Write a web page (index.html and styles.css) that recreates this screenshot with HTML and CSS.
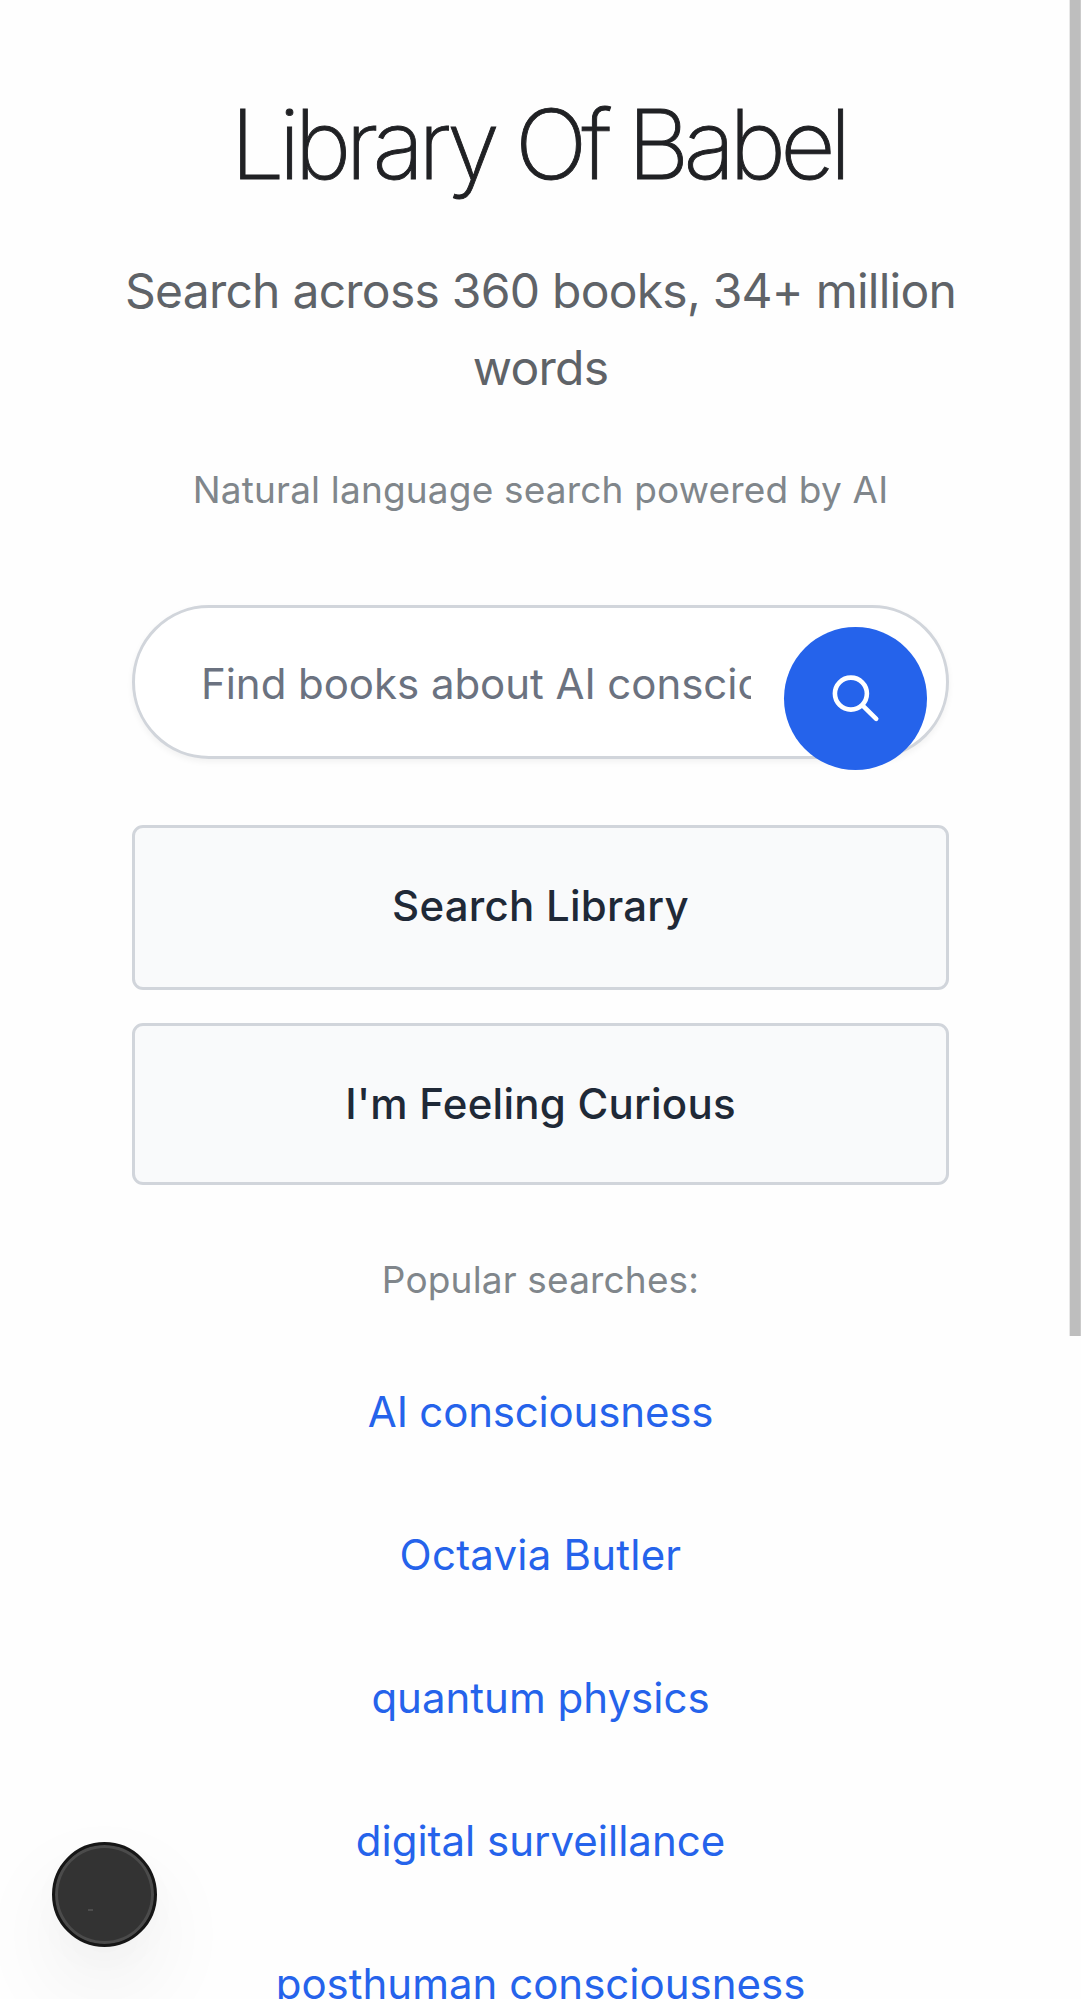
FILE: index.html
```
<!DOCTYPE html>
<html lang="en">
<head>
<meta charset="utf-8">
<title>Library Of Babel</title>
<link rel="stylesheet" href="styles.css">
</head>
<body>
<main class="page">
  <header class="hero">
    <h1 class="title">Library Of Babel</h1>
    <p class="subtitle">Search across 360 books, 34+ million words</p>
    <p class="tagline">Natural language search powered by AI</p>
  </header>
  <form class="search">
    <div class="search-box">
      <span class="search-text">Find books about AI consciousness</span>
      <button class="search-submit" type="button" aria-label="Search">
        <svg class="search-icon" viewBox="0 0 48 48" fill="none" stroke="#fff" stroke-width="4.6" stroke-linecap="round">
          <circle cx="18.9" cy="18.6" r="16"/>
          <path d="M31 30.8 44.2 43.8"/>
        </svg>
      </button>
    </div>
    <div class="actions">
      <button class="action action-primary" type="button">Search Library</button>
      <button class="action action-random" type="button">I'm Feeling Curious</button>
    </div>
  </form>
  <section class="popular">
    <p class="popular-label">Popular searches:</p>
    <nav class="popular-links">
      <a class="link link-tight">AI consciousness</a>
      <a class="link link-wide">Octavia Butler</a>
      <a class="link">quantum physics</a>
      <a class="link">digital surveillance</a>
      <a class="link">posthuman consciousness</a>
    </nav>
  </section>
</main>
<div class="fab"><span class="fab-mark"></span></div>
<div class="scrollbar"></div>
</body>
</html>
```
FILE: styles.css
```
* { box-sizing: border-box; }

body {
  margin: 0;
  height: 1999px;
  overflow: hidden;
  position: relative;
  background: #fefefe;
  font-family: Inter, "Noto Sans", sans-serif;
}

h1, p { margin: 0; }

button { font-family: inherit; }

.page {
  display: flex;
  flex-direction: column;
  padding-top: 87px;
  text-align: center;
}

.hero { padding: 0 88px; }

.title {
  font-size: 96px;
  font-weight: 200;
  line-height: 115px;
  letter-spacing: -5.83px;
  text-indent: -5px;
  color: #202124;
  -webkit-text-stroke: 0.9px #202124;
  white-space: nowrap;
}

.subtitle {
  margin-top: 50px;
  font-size: 48px;
  line-height: 77px;
  letter-spacing: -0.75px;
  color: #5f6368;
}

.tagline {
  margin-top: 56px;
  font-size: 37px;
  line-height: 55px;
  letter-spacing: 0.17px;
  color: #80868b;
}

.search {
  display: flex;
  flex-direction: column;
  gap: 66px;
  margin: 88px 132px 0;
}

.search-box {
  position: relative;
  display: flex;
  align-items: center;
  height: 154px;
  padding: 3px 195px 0 66px;
  border: 3px solid #d1d5db;
  border-radius: 77px;
  background: #fff;
  box-shadow: 0 3px 6px rgba(0, 0, 0, 0.05);
}

.search-text {
  flex: 1;
  overflow: hidden;
  text-align: left;
  white-space: nowrap;
  font-size: 42px;
  line-height: 60px;
  letter-spacing: -0.05px;
  color: #6b7280;
}

/* The round button hangs slightly below the field. */
.search-submit {
  position: absolute;
  top: 19px;
  right: 19px;
  display: flex;
  align-items: center;
  justify-content: center;
  width: 143px;
  height: 143px;
  padding: 0;
  border: 0;
  border-radius: 50%;
  background: #2563eb;
}

.search-icon { width: 48px; height: 48px; }

.actions {
  display: flex;
  flex-direction: column;
  gap: 33px;
}

.action {
  height: 165px;
  padding: 0 0 5px;
  border: 3px solid #d1d5db;
  border-radius: 11px;
  background: #f9fafb;
  font-size: 42px;
  font-weight: 500;
  letter-spacing: 0.24px;
  color: #1f2937;
}

.action-random { height: 162px; padding-bottom: 2px; }

.popular { margin-top: 67px; }

.popular-label {
  font-size: 37px;
  line-height: 55px;
  letter-spacing: 0.16px;
  color: #80868b;
}

.popular-links {
  display: flex;
  flex-direction: column;
  margin-top: 33px;
}

.link {
  font-size: 42px;
  line-height: 143px;
  color: #2563eb;
}

.link-tight { letter-spacing: -0.18px; }

.link-wide { letter-spacing: 0.22px; }

.fab {
  position: absolute;
  left: 52px;
  top: 1842px;
  width: 105px;
  height: 105px;
  border: 3px solid #161616;
  border-radius: 50%;
  background: #333;
  box-shadow: inset 0 0 0 3px #4b4b4b, 0 40px 92px rgba(0, 0, 0, 0.065), 0 12px 34px rgba(0, 0, 0, 0.02);
}

.fab-mark {
  position: absolute;
  left: 33px;
  top: 64px;
  width: 5px;
  height: 2px;
  background: #4d4d4d;
}

.scrollbar {
  position: absolute;
  top: 0;
  right: 0;
  width: 12px;
  height: 1336px;
  border-left: 1px solid #e8e8e8;
  border-right: 1px solid #cacaca;
  background: #bebebe;
}
```
